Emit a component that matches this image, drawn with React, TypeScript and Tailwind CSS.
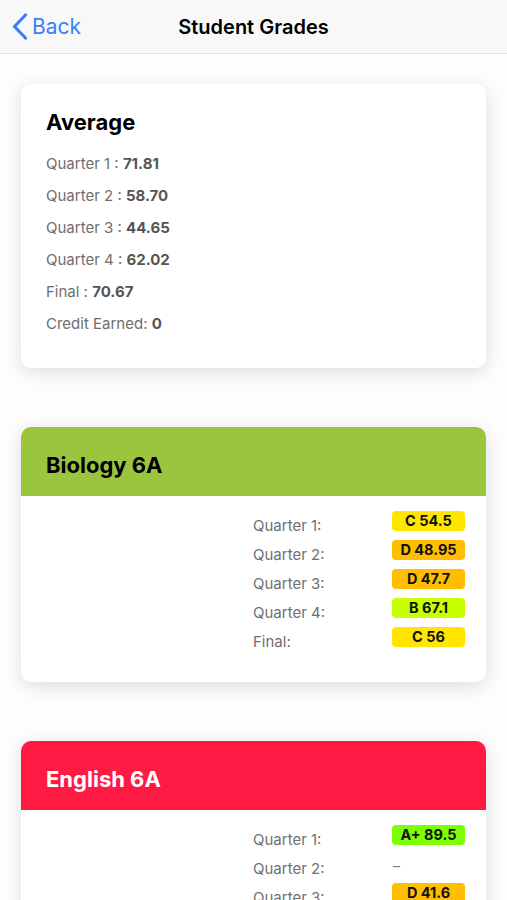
import React from "react";

type Grade = { label: string; grade?: string; color?: string };

const averages = [
  { label: "Quarter 1 :", value: "71.81" },
  { label: "Quarter 2 :", value: "58.70" },
  { label: "Quarter 3 :", value: "44.65" },
  { label: "Quarter 4 :", value: "62.02" },
  { label: "Final :", value: "70.67" },
  { label: "Credit Earned:", value: "0" },
];

const courses: {
  name: string;
  header: string;
  titleColor: string;
  grades: Grade[];
}[] = [
  {
    name: "Biology 6A",
    header: "bg-[#9bc43f]",
    titleColor: "text-black",
    grades: [
      { label: "Quarter 1:", grade: "C 54.5", color: "bg-[#ffe500]" },
      { label: "Quarter 2:", grade: "D 48.95", color: "bg-[#ffbf00]" },
      { label: "Quarter 3:", grade: "D 47.7", color: "bg-[#ffbf00]" },
      { label: "Quarter 4:", grade: "B 67.1", color: "bg-[#c6ff00]" },
      { label: "Final:", grade: "C 56", color: "bg-[#ffe500]" },
    ],
  },
  {
    name: "English 6A",
    header: "bg-[#ff1a44]",
    titleColor: "text-white",
    grades: [
      { label: "Quarter 1:", grade: "A+ 89.5", color: "bg-[#7cff00]" },
      { label: "Quarter 2:" },
      { label: "Quarter 3:", grade: "D 41.6", color: "bg-[#ffbf00]" },
      { label: "Quarter 4:", grade: "C 55.2", color: "bg-[#ffe500]" },
      { label: "Final:", grade: "C 58", color: "bg-[#ffe500]" },
    ],
  },
];

function NavBar() {
  return (
    <div className="relative flex h-[54px] items-center justify-center border-b border-[#e2e2e2] bg-[#f8f8f8]">
      <div className="absolute left-[12px] top-0 flex h-full items-center gap-[4px] text-[#3a7ff6]">
        <svg width="16" height="27" viewBox="0 0 16 27" fill="none">
          <path
            d="M13.5 2 L2.5 13.5 L13.5 25"
            stroke="currentColor"
            strokeWidth="3.2"
            strokeLinecap="round"
            strokeLinejoin="round"
          />
        </svg>
        <span className="text-[21px] leading-none">Back</span>
      </div>
      <h1 className="text-[20px] font-semibold text-black">Student Grades</h1>
    </div>
  );
}

function AverageCard() {
  return (
    <div className="rounded-[10px] bg-white pl-[25px] pt-[24px] pb-[28px] shadow-[0_4px_18px_rgba(0,0,0,0.13)]">
      <h2 className="mb-[12px] text-[22px] font-bold leading-[28px] text-black">
        Average
      </h2>
      {averages.map((row) => (
        <div key={row.label} className="h-[32px] text-[15px] leading-[32px] text-[#6e6e6e]">
          {row.label} <span className="font-bold text-[#555]">{row.value}</span>
        </div>
      ))}
    </div>
  );
}

function CourseCard(props: { course: (typeof courses)[number] }) {
  const c = props.course;
  return (
    <div className="overflow-hidden rounded-[10px] bg-white shadow-[0_4px_18px_rgba(0,0,0,0.13)]">
      <div className={"h-[69px] pl-[25px] pt-[24px] " + c.header}>
        <h2 className={"text-[22px] font-bold leading-[28px] " + c.titleColor}>{c.name}</h2>
      </div>
      <div className="pt-[15px] pb-[26px] pr-[21px]">
        {c.grades.map((g) => (
          <div key={g.label} className="flex h-[29px] justify-end">
            <div className="w-[139px] pt-[5px] text-[15px] leading-[20px] text-[#707070]">
              {g.label}
            </div>
            <div className="w-[73px]">
              {g.grade ? (
                <div
                  className={
                    "flex h-[20px] items-center justify-center rounded-[4px] text-[14.5px] font-bold text-[#111] " +
                    g.color
                  }
                >
                  {g.grade}
                </div>
              ) : (
                <div className="pl-[1px] pt-[2px] text-[14px] leading-[20px] text-[#777]">–</div>
              )}
            </div>
          </div>
        ))}
      </div>
    </div>
  );
}

export default function App() {
  return (
    <div className="min-h-screen bg-[#fdfdfd] font-['Inter',sans-serif]">
      <NavBar />
      <div className="flex flex-col gap-[59px] px-[21px] pt-[30px] pb-[40px]">
        <AverageCard />
        {courses.map((c) => (
          <CourseCard key={c.name} course={c} />
        ))}
      </div>
    </div>
  );
}
